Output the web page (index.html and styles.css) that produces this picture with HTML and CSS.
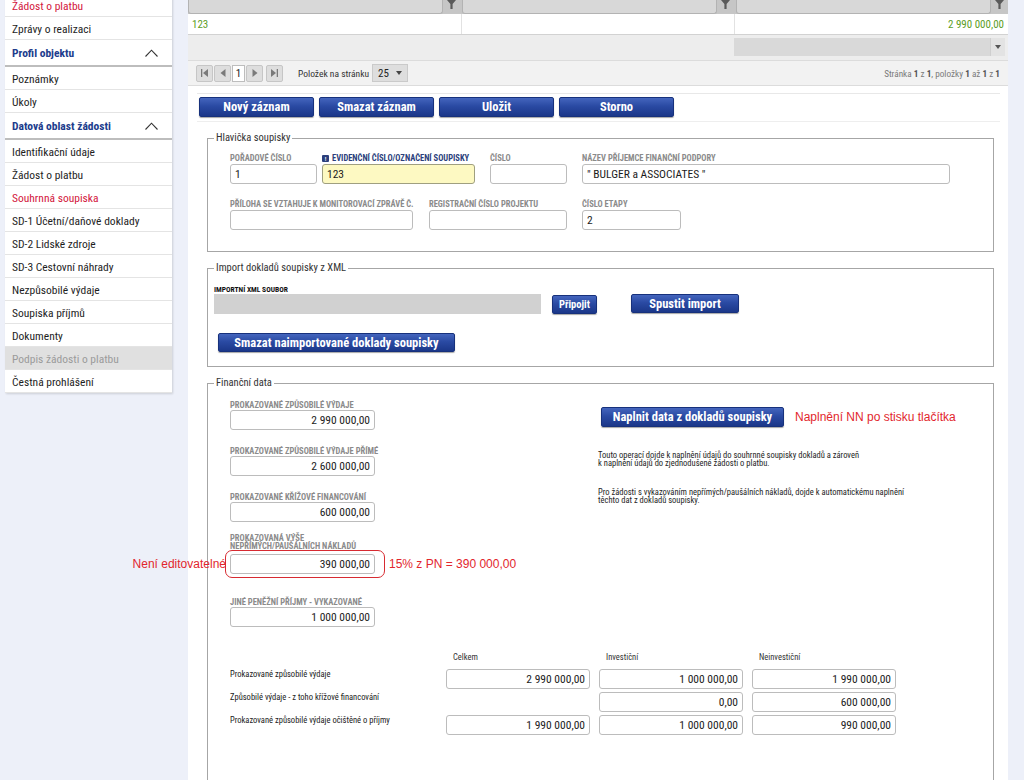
FILE: index.html
```html
<!DOCTYPE html>
<html lang="cs">
<head>
<meta charset="utf-8">
<title>Souhrnná soupiska</title>
<link rel="stylesheet" href="styles.css">
</head>
<body>
<div class="page">
  <nav class="sidebar">
    <div class="nav-item red">Žádost o platbu</div>
    <div class="nav-item">Zprávy o realizaci</div>
    <div class="nav-head"><span>Profil objektu</span><svg class="chev" width="13" height="8" viewBox="0 0 13 8"><polyline points="0.5,7.5 6.5,1.2 12.5,7.5" fill="none" stroke="#333" stroke-width="1.1"/></svg></div>
    <div class="nav-item">Poznámky</div>
    <div class="nav-item">Úkoly</div>
    <div class="nav-head"><span>Datová oblast žádosti</span><svg class="chev" width="13" height="8" viewBox="0 0 13 8"><polyline points="0.5,7.5 6.5,1.2 12.5,7.5" fill="none" stroke="#333" stroke-width="1.1"/></svg></div>
    <div class="nav-item">Identifikační údaje</div>
    <div class="nav-item">Žádost o platbu</div>
    <div class="nav-item red">Souhrnná soupiska</div>
    <div class="nav-item">SD-1 Účetní/daňové doklady</div>
    <div class="nav-item">SD-2 Lidské zdroje</div>
    <div class="nav-item">SD-3 Cestovní náhrady</div>
    <div class="nav-item">Nezpůsobilé výdaje</div>
    <div class="nav-item">Soupiska příjmů</div>
    <div class="nav-item">Dokumenty</div>
    <div class="nav-item disabled">Podpis žádosti o platbu</div>
    <div class="nav-item">Čestná prohlášení</div>
  </nav>

  <main class="main">
    <div class="grid-head">
      <div class="gh-col"><div class="gh-box"></div><div class="gh-filter"><svg width="9" height="9" viewBox="0 0 9 9"><path d="M0 0H9L5.6 4V9H3.4V4Z" fill="#5a5a5a"/></svg></div></div>
      <div class="gh-col"><div class="gh-box"></div><div class="gh-filter"><svg width="9" height="9" viewBox="0 0 9 9"><path d="M0 0H9L5.6 4V9H3.4V4Z" fill="#5a5a5a"/></svg></div></div>
      <div class="gh-col"><div class="gh-box"></div><div class="gh-filter"><svg width="9" height="9" viewBox="0 0 9 9"><path d="M0 0H9L5.6 4V9H3.4V4Z" fill="#5a5a5a"/></svg></div></div>
    </div>
    <div class="grid-row">
      <div class="gr-cell">123</div>
      <div class="gr-cell"></div>
      <div class="gr-cell num">2 990 000,00</div>
    </div>
    <div class="grid-filter">
      <div class="gf-cell"></div>
      <div class="gf-cell"></div>
      <div class="gf-cell sel"><div class="gf-input"></div><div class="gf-arrow"><svg width="6" height="4" viewBox="0 0 6 4"><path d="M0 0H6L3 4Z" fill="#555"/></svg></div></div>
    </div>
    <div class="pager">
      <div class="pg-btn"><svg width="9" height="8" viewBox="0 0 9 8"><rect x="1" y="0" width="1.3" height="8" fill="#7a7a7a"/><path d="M8 0V8L3 4Z" fill="#7a7a7a"/></svg></div>
      <div class="pg-btn"><svg width="6" height="8" viewBox="0 0 6 8"><path d="M5.5 0V8L0.5 4Z" fill="#7a7a7a"/></svg></div>
      <div class="pg-page">1</div>
      <div class="pg-btn"><svg width="6" height="8" viewBox="0 0 6 8"><path d="M0.5 0V8L5.5 4Z" fill="#7a7a7a"/></svg></div>
      <div class="pg-btn pg-last"><svg width="9" height="8" viewBox="0 0 9 8"><path d="M1 0V8L6 4Z" fill="#7a7a7a"/><rect x="6.7" y="0" width="1.3" height="8" fill="#7a7a7a"/></svg></div>
      <span class="pg-label">Položek na stránku</span>
      <div class="pg-select"><span>25</span><svg width="6" height="4" viewBox="0 0 6 4"><path d="M0 0H6L3 4Z" fill="#444"/></svg></div>
      <div class="pg-info">Stránka <b>1</b> z <b>1</b>, položky <b>1</b> až <b>1</b> z <b>1</b></div>
    </div>

    <div class="actions">
      <button class="btn btn-act">Nový záznam</button>
      <button class="btn btn-act">Smazat záznam</button>
      <button class="btn btn-act">Uložit</button>
      <button class="btn btn-act">Storno</button>
    </div>

    <fieldset class="fs">
      <legend>Hlavička soupisky</legend>
      <div class="hl">
        <div class="hrow">
          <div class="fld mr5 w87"><div class="lbl">Pořadové číslo</div><div class="inp">1</div></div>
          <div class="fld mr15 w153"><div class="lbl lbl-req"><span class="req">!</span>Evidenční číslo/označení soupisky</div><div class="inp yellow">123</div></div>
          <div class="fld mr15 w77"><div class="lbl">Číslo</div><div class="inp"></div></div>
          <div class="fld w368"><div class="lbl">Název příjemce finanční podpory</div><div class="inp">" BULGER a ASSOCIATES "</div></div>
        </div>
        <div class="hrow hrow2">
          <div class="fld mr16 w183"><div class="lbl">Příloha se vztahuje k monitorovací zprávě č.</div><div class="inp"></div></div>
          <div class="fld mr15 w138"><div class="lbl">Registrační číslo projektu</div><div class="inp"></div></div>
          <div class="fld w99"><div class="lbl">Číslo etapy</div><div class="inp">2</div></div>
        </div>
      </div>
    </fieldset>

    <fieldset class="fs fs-gap">
      <legend>Import dokladů soupisky z XML</legend>
      <div class="imp">
        <div class="lbl-dark">Importní XML soubor</div>
        <div class="imp-row">
          <div class="filebox"></div>
          <button class="btn btn-attach">Připojit</button>
          <button class="btn btn-run">Spustit import</button>
        </div>
        <button class="btn btn-del">Smazat naimportované doklady soupisky</button>
      </div>
    </fieldset>

    <fieldset class="fs fs-gap fs-fin">
      <legend>Finanční data</legend>
      <div class="fin">
        <div class="fin-left">
          <div class="ffield"><div class="lbl">Prokazované způsobilé výdaje</div><div class="inp num w145">2 990 000,00</div></div>
          <div class="ffield"><div class="lbl">Prokazované způsobilé výdaje přímé</div><div class="inp num w145">2 600 000,00</div></div>
          <div class="ffield"><div class="lbl">Prokazované křížové financování</div><div class="inp num w145">600 000,00</div></div>
          <div class="ffield ff-two">
            <div class="lbl lbl-two">Prokazovaná výše<br>nepřímých/paušálních nákladů</div>
            <div class="annot">
              <div class="inp num w145">390 000,00</div>
              <span class="ring"></span>
              <span class="note note-left">Není editovatelné</span>
              <span class="note note-right">15% z PN = 390 000,00</span>
            </div>
          </div>
          <div class="ffield ff-last"><div class="lbl">Jiné peněžní příjmy - vykazované</div><div class="inp num w145">1 000 000,00</div></div>
        </div>
        <div class="fin-right">
          <div class="fill-row">
            <button class="btn btn-fill">Naplnit data z dokladů soupisky</button>
            <span class="note note-fill">Naplnění NN po stisku tlačítka</span>
          </div>
          <p class="info">Touto operací dojde k naplnění údajů do souhrnné soupisky dokladů a zároveň<br>k naplnění údajů do zjednodušené žádosti o platbu.</p>
          <p class="info info2">Pro žádosti s vykazováním nepřímých/paušálních nákladů, dojde k automatickému naplnění<br>těchto dat z dokladů soupisky.</p>
        </div>
      </div>

      <div class="sumtable">
        <div></div>
        <div class="sum-h">Celkem</div>
        <div class="sum-h">Investiční</div>
        <div class="sum-h">Neinvestiční</div>

        <div class="sum-l">Prokazované způsobilé výdaje</div>
        <div class="inp num">2 990 000,00</div>
        <div class="inp num">1 000 000,00</div>
        <div class="inp num">1 990 000,00</div>

        <div class="sum-l">Způsobilé výdaje - z toho křížové financování</div>
        <div></div>
        <div class="inp num">0,00</div>
        <div class="inp num">600 000,00</div>

        <div class="sum-l">Prokazované způsobilé výdaje očištěné o příjmy</div>
        <div class="inp num">1 990 000,00</div>
        <div class="inp num">1 000 000,00</div>
        <div class="inp num">990 000,00</div>
      </div>
    </fieldset>
  </main>
</div>
</body>
</html>
```

FILE: styles.css
```css
* { box-sizing: border-box; }
html, body { margin: 0; padding: 0; }
body {
  width: 1024px;
  height: 780px;
  overflow: hidden;
  background: #edf0f9;
  font-family: "Roboto Condensed", "DejaVu Sans Condensed", "Liberation Sans Narrow", Roboto, sans-serif;
  font-stretch: condensed;
  color: #222;
}
.page { display: flex; align-items: flex-start; }

/* sidebar */
.sidebar {
  width: 167px;
  margin-left: 5px;
  margin-top: -6px;
  background: #fff;
  box-shadow: 1px 1px 2px rgba(0,0,0,.14);
}
.nav-item {
  height: 23px;
  padding: 2px 0 0 7px;
  line-height: 20px;
  font-size: 11.5px;
  border-bottom: 1px solid #e4e4e4;
  color: #1e1e1e;
  white-space: nowrap;
}
.nav-item.red { color: #d3173d; }
.nav-item.disabled { background: #e0e0e0; color: #9b9b9b; }
.nav-head {
  display: flex;
  justify-content: space-between;
  align-items: center;
  height: 27px;
  padding: 1px 14px 0 7px;
  font-size: 11.5px;
  font-weight: bold;
  color: #203c8c;
  border-bottom: 2px solid #bdbdbd;
}

/* main panel */
.main {
  width: 820px;
  margin-left: 16px;
  background: #fff;
  min-height: 800px;
}
.grid-head {
  display: flex;
  gap: 2px;
  height: 22px;
  margin-top: -8px;
  background: #c6c6c6;
}
.gh-col { flex: 1; display: flex; }
.gh-box {
  flex: 1;
  background: #d8d8d8;
  border: 1px solid #b3b3b3;
  border-top: 0;
  border-radius: 0 0 3px 3px;
}
.gh-filter {
  width: 17px;
  display: flex;
  align-items: flex-end;
  justify-content: center;
  padding-bottom: 5px;
}
.grid-row {
  display: flex;
  height: 21px;
  border-bottom: 1px solid #d2d2d2;
}
.gr-cell {
  flex: 1;
  font-size: 11px;
  line-height: 18px;
  padding: 2px 4px 0;
  color: #5c9d1f;
  border-right: 1px solid #e2e2e2;
}
.gr-cell:last-child { border-right: 0; }
.num { text-align: right; }
.grid-filter {
  display: flex;
  height: 26px;
  background: #ededed;
  border-bottom: 1px solid #dcdcdc;
}
.gf-cell { flex: 1; }
.gf-cell.sel { display: flex; padding: 3px 3px 0 5px; }
.gf-input { flex: 1; height: 18px; background: #d9d9d9; }
.gf-arrow {
  width: 15px;
  height: 18px;
  background: #e3e3e3;
  border-left: 1px solid #cfcfcf;
  display: flex;
  align-items: center;
  justify-content: center;
}
.pager {
  display: flex;
  align-items: center;
  height: 25px;
  padding-left: 8px;
  padding-right: 8px;
  background: #f2f2f2;
  border-bottom: 1px solid #dcdcdc;
}
.pg-btn {
  width: 17px;
  height: 17px;
  margin-right: 1px;
  background: #dedede;
  border: 1px solid #c6c6c6;
  border-radius: 2px;
  display: flex;
  align-items: center;
  justify-content: center;
}
.pg-last { margin-left: 2px; }
.pg-page {
  width: 13px;
  height: 17px;
  margin-right: 1px;
  background: #fff;
  border: 1px solid #bdbdbd;
  font-size: 11px;
  line-height: 15px;
  text-align: center;
}
.pg-label { font-size: 9.5px; color: #333; margin-left: 14px; }
.pg-select {
  display: flex;
  align-items: center;
  justify-content: space-between;
  width: 36px;
  height: 18px;
  margin-left: 3px;
  padding: 0 5px 0 5px;
  background: #dedede;
  border: 1px solid #cacaca;
  font-size: 11px;
}
.pg-info { margin-left: auto; font-size: 9.2px; color: #7a7a7a; }
.pg-info b { color: #555; }

/* buttons */
.btn {
  display: block;
  height: 20px;
  padding: 0;
  border: 1px solid #17317c;
  border-radius: 2px;
  background: linear-gradient(#4465bd, #2a4aa3 45%, #1b3789);
  box-shadow: 0 1px 1px rgba(0,0,0,.35);
  color: #fff;
  font-family: inherit;
  font-stretch: condensed;
  font-weight: bold;
  font-size: 12.5px;
  line-height: 18px;
  text-align: center;
  white-space: nowrap;
}
.actions {
  display: flex;
  gap: 5px;
  margin: 7px 8px 0 9px;
  padding: 3px 0 4px 2px;
  border-top: 1px solid #e8e8e8;
  border-bottom: 1px solid #eeeeee;
}
.btn-act { width: 115px; }

/* fieldsets */
.fs {
  margin: 10px 14px 0 19px;
  padding: 0;
  border: 1px solid #a6a6a6;
  min-width: 0;
}
.fs-gap { margin-top: 10px; }
.fs legend {
  margin-left: 6px;
  padding: 0 2px;
  font-size: 10.5px;
  line-height: 12px;
  color: #333;
}
.hl { padding: 9px 0 21px 22px; }
.hrow { display: flex; }
.hrow2 { margin-top: 15px; }
.fld { display: flex; flex-direction: column; flex: none; }
.mr5 { margin-right: 5px; }
.mr15 { margin-right: 15px; }
.mr16 { margin-right: 16px; }
.lbl {
  font-size: 8.5px;
  line-height: 10px;
  font-weight: bold;
  color: #8b8b8b;
  text-transform: uppercase;
  white-space: nowrap;
  margin-bottom: 1px;
}
.lbl-req { color: #2c3f7c; display: flex; align-items: center; }
.req {
  display: inline-block;
  width: 7px;
  height: 7px;
  margin-right: 3px;
  background: #2c3f7c;
  border-radius: 1px;
  color: #fff;
  font-size: 6px;
  line-height: 7px;
  text-align: center;
}
.inp {
  height: 20px;
  padding: 0 4px;
  background: #fff;
  border: 1px solid #bcbcbc;
  border-radius: 3px;
  font-size: 11.5px;
  line-height: 18px;
  color: #1c1c1c;
  white-space: nowrap;
  overflow: hidden;
}
.yellow { background: #fdf9c2; border-color: #9f9f80; }
.w77 { width: 77px; }
.w87 { width: 87px; }
.w99 { width: 99px; }
.w138 { width: 138px; }
.w145 { width: 145px; }
.w153 { width: 153px; }
.w183 { width: 183px; }
.w368 { width: 368px; }

/* import */
.imp { padding: 11px 0 14px 6px; }
.lbl-dark {
  font-size: 7.5px;
  line-height: 9px;
  font-weight: bold;
  color: #111;
  text-transform: uppercase;
}
.imp-row { display: flex; align-items: flex-start; }
.filebox { width: 327px; height: 20px; background: #d1d1d1; }
.btn-attach { width: 45px; height: 19px; margin: 1px 0 0 11px; font-size: 10.5px; line-height: 17px; }
.btn-run { width: 108px; height: 19px; margin-left: 34px; line-height: 17px; }
.btn-del { width: 237px; height: 19px; margin: 19px 0 0 4px; line-height: 17px; }

/* finance */
.fs-fin { padding-bottom: 80px; }
.fin { display: flex; padding: 11px 0 0 22px; }
.fin-left { width: 368px; flex: none; }
.ffield + .ffield { margin-top: 16px; }
.ffield .lbl { margin-bottom: 0; }
.ffield.ff-two { margin-top: 12px; }
.lbl-two { line-height: 8px; margin-bottom: 4px !important; }
.ffield.ff-last { margin-top: 23px; }
.annot { position: relative; width: 145px; }
.ring {
  position: absolute;
  left: -5px;
  top: -4px;
  width: 160px;
  height: 28px;
  border: 1.5px solid #d72b31;
  border-radius: 7px;
}
.note {
  font-family: "Liberation Sans", Arial, sans-serif;
  font-stretch: normal;
  font-size: 12px;
  color: #e2262d;
  white-space: nowrap;
}
.note-left { position: absolute; right: 100%; margin-right: 4px; top: 3px; line-height: 14px; }
.note-right { position: absolute; left: 159px; top: 3px; line-height: 14px; }
.fin-right { flex: none; }
.fill-row { display: flex; align-items: center; margin-top: 7px; }
.btn-fill { width: 183px; margin-left: 3px; }
.note-fill { margin-left: 11px; }
.info {
  margin: 24px 0 0;
  font-size: 8.5px;
  line-height: 8px;
  color: #1e1e1e;
  white-space: nowrap;
}
.info2 { margin-top: 21px; }

.sumtable {
  display: grid;
  grid-template-columns: 207px 144px 144px 144px;
  column-gap: 9px;
  row-gap: 3px;
  margin: 25px 0 0 22px;
}
.sum-h { font-size: 8.5px; line-height: 10px; color: #333; padding-left: 7px; margin-bottom: 4px; }
.sum-l { font-size: 8.5px; line-height: 10px; color: #222; }
```
